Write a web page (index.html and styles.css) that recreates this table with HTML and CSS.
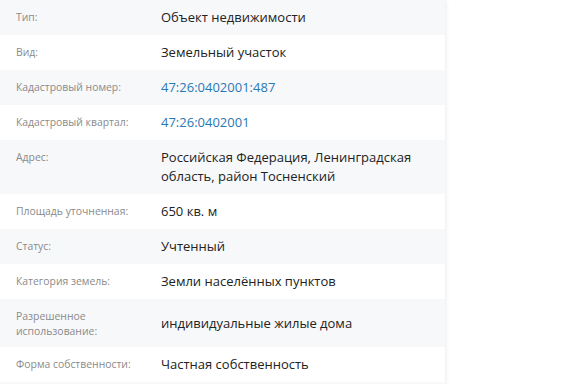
FILE: index.html
```html
<!DOCTYPE html>
<html lang="ru">
<head>
<meta charset="utf-8">
<link rel="stylesheet" href="styles.css">
</head>
<body>
<div class="card">
  <div class="row alt"><div class="label">Тип:</div><div class="value">Объект недвижимости</div></div>
  <div class="row"><div class="label">Вид:</div><div class="value">Земельный участок</div></div>
  <div class="row alt"><div class="label">Кадастровый номер:</div><div class="value"><a class="link" href="#">47:26:0402001:487</a></div></div>
  <div class="row"><div class="label">Кадастровый квартал:</div><div class="value"><a class="link" href="#">47:26:0402001</a></div></div>
  <div class="row alt"><div class="label">Адрес:</div><div class="value">Российская Федерация, Ленинградская область, район Тосненский</div></div>
  <div class="row"><div class="label">Площадь уточненная:</div><div class="value">650 кв. м</div></div>
  <div class="row alt"><div class="label">Статус:</div><div class="value">Учтенный</div></div>
  <div class="row"><div class="label">Категория земель:</div><div class="value">Земли населённых пунктов</div></div>
  <div class="row alt"><div class="label">Разрешенное использование:</div><div class="value">индивидуальные жилые дома</div></div>
  <div class="row"><div class="label">Форма собственности:</div><div class="value">Частная собственность</div></div>
  <div class="row alt"><div class="label">&nbsp;</div><div class="value">&nbsp;</div></div>
</div>
</body>
</html>
```
FILE: styles.css
```css
html, body {
  margin: 0;
  padding: 0;
  background: #ffffff;
  overflow: hidden;
}
body {
  font-family: "Open Sans", "Noto Sans", sans-serif;
}
.card {
  width: 445px;
  background: #ffffff;
  box-shadow: 1px 0 4px rgba(0, 0, 0, 0.08);
}
.row {
  display: flex;
  padding: 8px 0;
  background: #ffffff;
}
.row.alt {
  background: #f7f8fa;
}
.label {
  flex: 0 0 129px;
  padding-left: 16px;
  padding-right: 16px;
  padding-top: 2px;
  align-self: flex-start;
  font-size: 10.4px;
  line-height: 15px;
  color: #8a8a8a;
}
.value {
  flex: 1;
  align-self: center;
  padding-right: 12px;
  font-size: 13px;
  line-height: 19px;
  color: #222222;
}
.link {
  color: #2a78b5;
  text-decoration: none;
}
```
